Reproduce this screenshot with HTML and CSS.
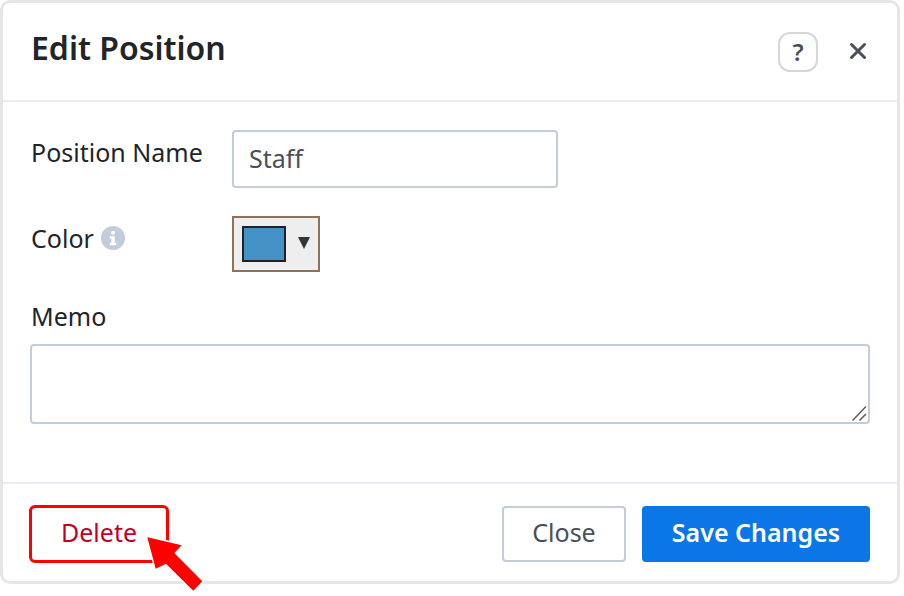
FILE: index.html
```html
<!DOCTYPE html>
<html lang="en">
<head>
  <meta charset="UTF-8">
  <title>Edit Position</title>
  <link rel="stylesheet" href="styles.css">
</head>
<body>

  <div class="modal">
    <div class="modal-header">
      <h2>Edit Position</h2>
      <div class="header-actions">
        <button class="help-button">?</button>
        <button class="close-button" aria-label="Close">
          <svg width="18" height="18" viewBox="0 0 18 18"><path d="M2.5 2.5l13 13M15.5 2.5l-13 13" stroke="#495057" stroke-width="3" stroke-linecap="round"/></svg>
        </button>
      </div>
    </div>

    <div class="modal-body">
      <div class="form-row name-row">
        <label>Position Name</label>
        <input type="text" class="name-input" value="Staff">
      </div>
      <div class="form-row color-row">
        <label>Color
          <svg class="info-icon" width="24" height="24" viewBox="0 0 24 24"><circle cx="12" cy="12" r="12" fill="#c2ccda"/><circle cx="12" cy="6.8" r="2" fill="#fff"/><path d="M8.8 10.2h4.9v6.6h1.6v2.4H8.8v-2.4h1.6v-4.2H8.8z" fill="#fff"/></svg>
        </label>
        <div class="color-picker">
          <span class="swatch"></span>
          <span class="caret"></span>
        </div>
      </div>
      <label class="memo-label">Memo</label>
      <div class="memo-wrap">
        <textarea class="memo-input"></textarea>
        <svg class="memo-grip" width="16" height="16" viewBox="0 0 16 16"><path d="M14 0.500L0.500 14.500M14 8L7.500 14.500" stroke="#5c5c5c" stroke-width="1.500"/></svg>
      </div>
    </div>

    <div class="modal-footer">
      <button class="btn btn-delete">Delete</button>
      <div class="footer-right">
        <button class="btn btn-close">Close</button>
        <button class="btn btn-save">Save Changes</button>
      </div>
    </div>

    <!-- red callout arrow on top of the delete button -->
    <svg class="callout-arrow" width="70" height="66" viewBox="0 0 70 66">
      <path d="M7.300 7.300L41.700 15.300L34.300 23L62.300 51.300L53.300 60.700L26 33.700L15.700 38.700Z" fill="#f00" stroke="#fff" stroke-width="3" paint-order="stroke" stroke-linejoin="round"/>
    </svg>
  </div>

</body>
</html>
```

FILE: styles.css
```css
* {
  box-sizing: border-box;
}
body {
  margin: 0;
  min-height: 100vh;
  background-color: #ffffff;
  font-family: "Noto Sans", Arial, sans-serif;
  color: #212529;
}
button, input, textarea {
  font-family: inherit;
}
.modal {
  position: relative;
  display: flex;
  flex-direction: column;
  width: 900px;
  height: 584px;
  background-color: #ffffff;
  border: 3px solid #e6e6e6;
  border-radius: 10px;
}
.modal-header {
  display: flex;
  justify-content: space-between;
  align-items: center;
  height: 99px;
  padding: 0 30px 0 28px;
  border-bottom: 2px solid #e9edf3;
}
.modal-header h2 {
  margin: 0 0 8px;
  font-size: 32px;
  font-weight: 600;
  line-height: 1;
}
.header-actions {
  display: flex;
  align-items: center;
  gap: 31px;
}
.help-button {
  width: 40px;
  height: 40px;
  padding: 0;
  background: none;
  border: 2px solid #d6d6d6;
  border-radius: 12px;
  color: #495057;
  font-size: 24px;
  font-weight: 600;
}
.close-button {
  display: flex;
  margin-bottom: 2px;
  padding: 0;
  background: none;
  border: none;
}
.modal-body {
  flex: 1;
  padding: 28px 27px 0;
}
.form-row {
  display: flex;
}
.form-row label, .memo-label {
  display: flex;
  align-items: center;
  gap: 7px;
  width: 202px;
  padding-left: 1px;
  font-size: 25px;
  line-height: 32px;
}
.name-row {
  align-items: flex-start;
  margin-bottom: 28px;
}
.name-row label {
  padding-top: 7px;
  line-height: 30px;
}
.name-input {
  width: 326px;
  height: 58px;
  padding: 0 15px 3px;
  border: 2px solid #c2ccda;
  border-radius: 4px;
  color: #495057;
  font-size: 25px;
}
.color-row {
  align-items: flex-start;
  margin-bottom: 28px;
}
.color-row label {
  height: 44px;
}
.color-picker {
  display: flex;
  align-items: center;
  gap: 12px;
  width: 88px;
  height: 56px;
  padding-left: 8px;
  background-color: #eeeeee;
  border: 2px solid #8f7358;
}
.swatch {
  width: 44px;
  height: 36px;
  background-color: #4492c6;
  border: 2px solid #222222;
}
.caret {
  width: 0;
  height: 0;
  margin-bottom: 2px;
  border-left: 6px solid transparent;
  border-right: 6px solid transparent;
  border-top: 12px solid #333333;
}
.memo-label {
  width: auto;
  margin-bottom: 12px;
}
.memo-wrap {
  position: relative;
  width: 840px;
}
.memo-input {
  display: block;
  width: 840px;
  height: 80px;
  border: 2px solid #c2ccda;
  border-radius: 4px;
  resize: none;
}
.memo-grip {
  position: absolute;
  right: 2px;
  bottom: 2px;
}
.modal-footer {
  display: flex;
  justify-content: space-between;
  align-items: center;
  height: 99px;
  padding: 2px 27px 0 26px;
  border-top: 2px solid #e9edf3;
}
.footer-right {
  display: flex;
  gap: 16px;
}
.btn {
  height: 56px;
  padding: 0 0 3px;
  border-radius: 4px;
  font-size: 25px;
  cursor: pointer;
}
.btn-delete {
  width: 140px;
  height: 58px;
  background-color: #ffffff;
  border: 3px solid #ff0000;
  border-radius: 6px;
  color: #c4001f;
}
.btn-close {
  width: 124px;
  background-color: #ffffff;
  border: 2px solid #c2ccda;
  color: #495057;
}
.btn-save {
  width: 228px;
  background-color: #0a76e8;
  border: none;
  color: #ffffff;
  font-weight: 600;
}
.callout-arrow {
  position: absolute;
  left: 137px;
  top: 527px;
}
```
